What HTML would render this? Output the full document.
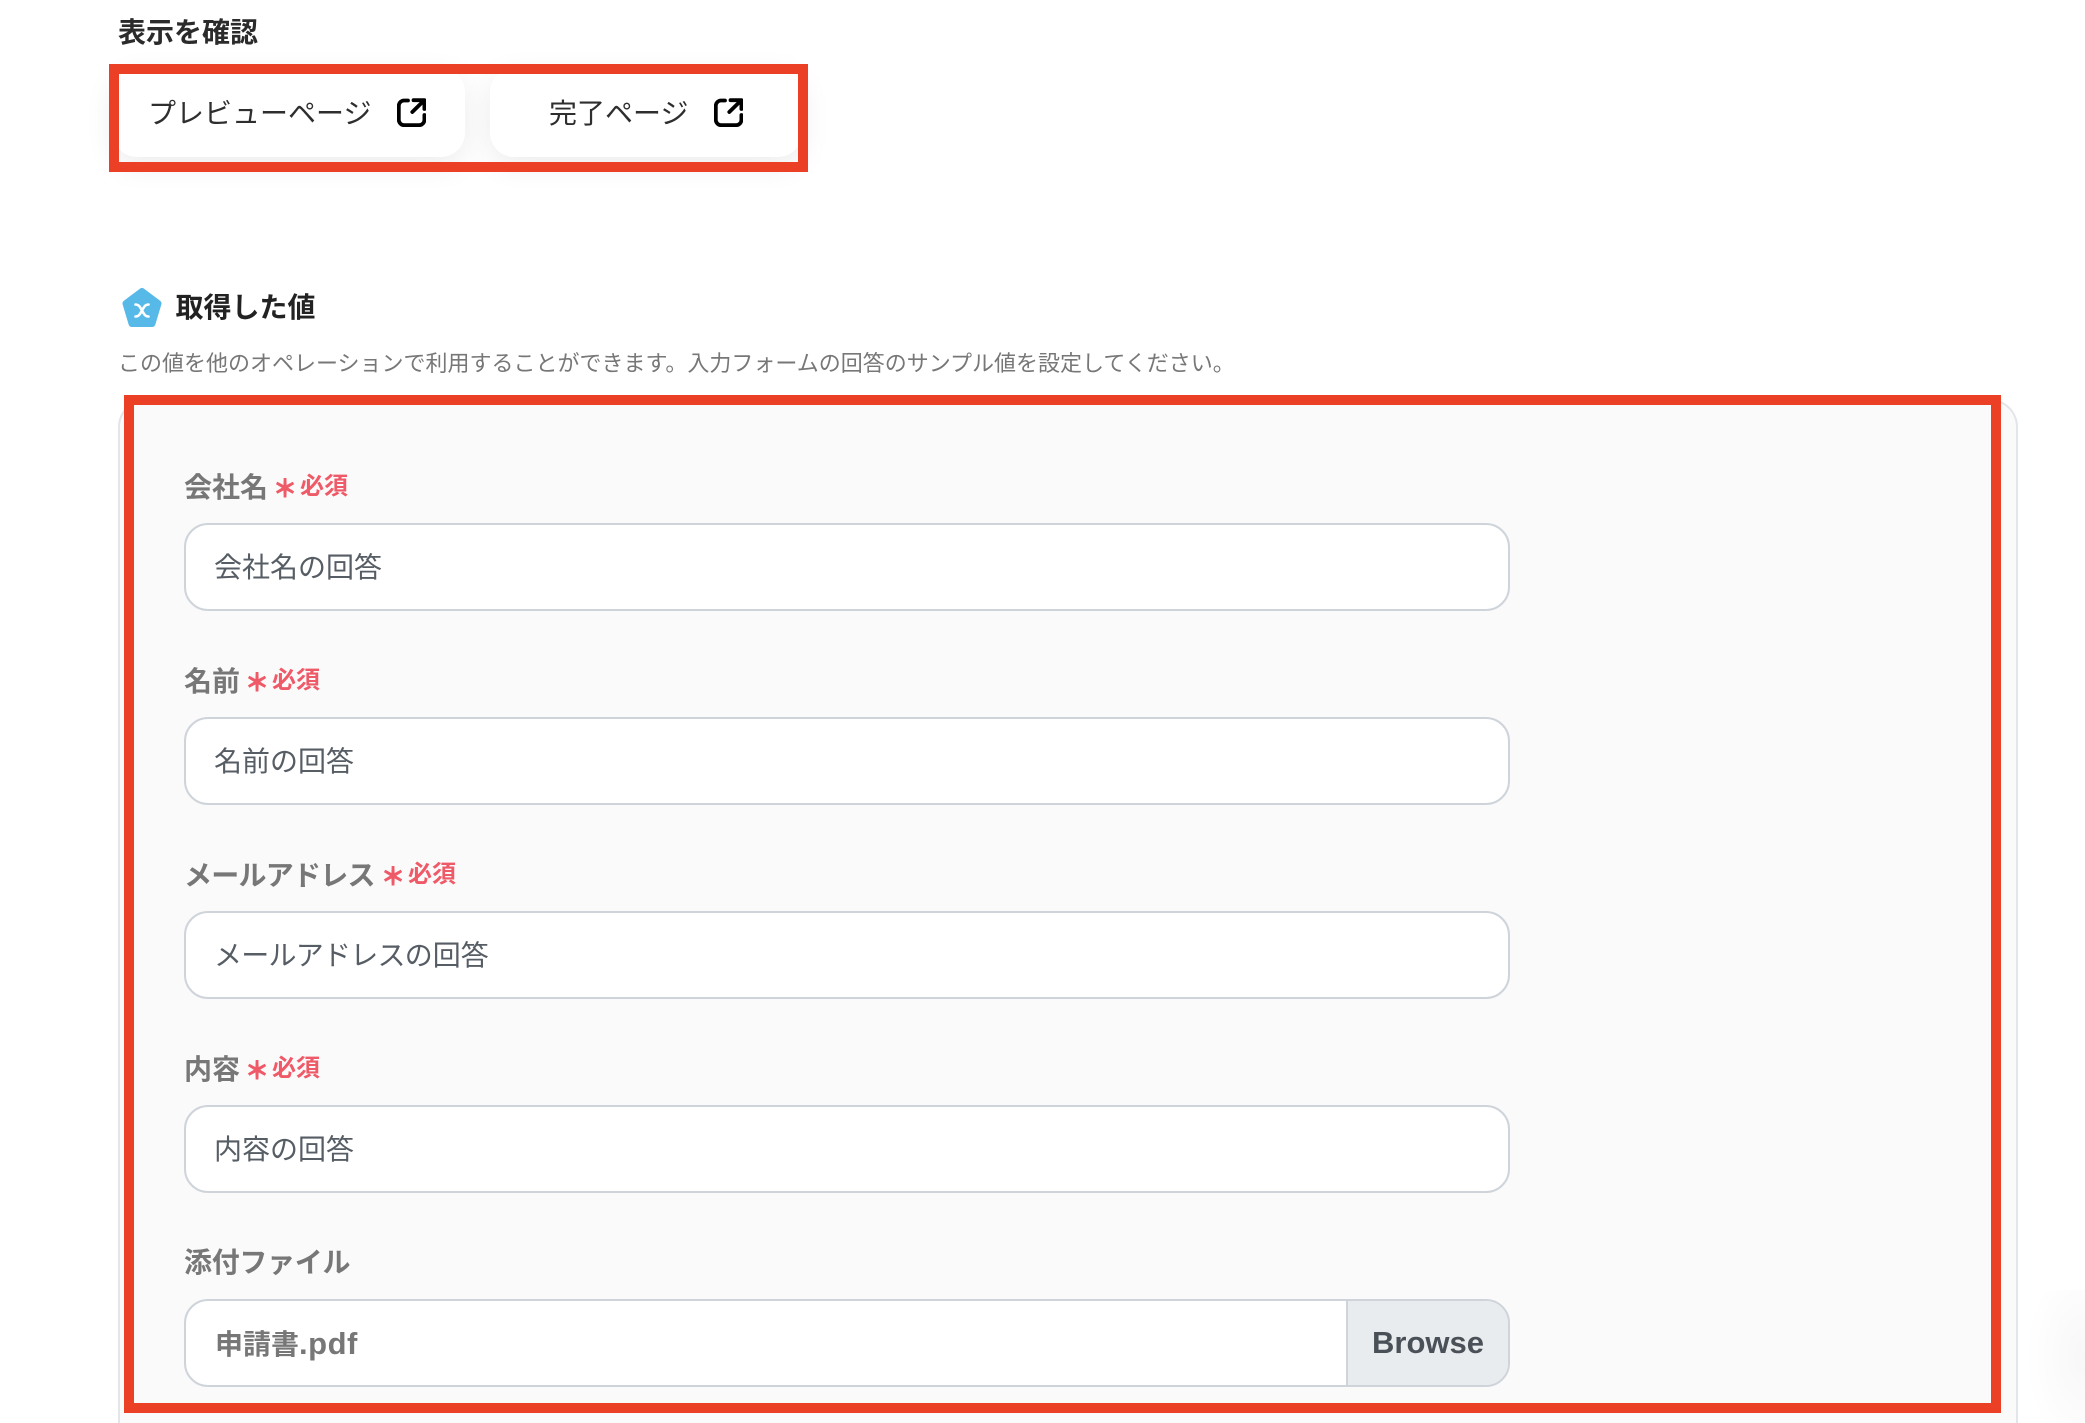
<!DOCTYPE html>
<html lang="ja">
<head>
<meta charset="utf-8">
<title>表示を確認</title>
<style>
html,body{margin:0;padding:0;background:#fff;width:2085px;height:1423px;overflow:hidden}
body{font-family:"Liberation Sans","Noto Sans CJK JP",sans-serif}
#w{position:relative;width:2085px;height:1423px;overflow:hidden}
.t{position:absolute;white-space:nowrap;line-height:40px;height:40px}
.b{font-weight:700}
.btn{position:absolute;top:68px;height:89px;background:#fff;border-radius:24px;box-shadow:0 8px 30px rgba(0,0,0,.08)}
.red{position:absolute;box-sizing:border-box;border:10px solid #eb4025}
.panel{position:absolute;left:118px;top:399px;width:1900px;height:1024px;box-sizing:border-box;background:#fafafa;border:2px solid #e2e5ea;border-bottom:0;border-radius:28px 28px 0 0}
.input{position:absolute;left:184px;width:1326px;height:88px;box-sizing:border-box;background:#fff;border:2px solid #ced4da;border-radius:24px}
.label{color:#777;font-size:28px;font-weight:700;left:184px}
.ast{color:#ef5a68;font-size:24px;font-weight:700;font-family:"Noto Sans CJK JP",sans-serif;-webkit-text-stroke:.9px #ef5a68}
.req{color:#ef5a68;font-size:24px;font-weight:700}
.val{color:#565d64;font-size:28px;left:214px}
.k{letter-spacing:-.75px}
.icon{position:absolute;top:98px;width:29px;height:29px}
</style>
</head>
<body>
<div id="w">
<div style="position:absolute;left:2025px;top:1290px;width:60px;height:133px;background:radial-gradient(ellipse 60px 100px at 100% 50%,rgba(0,0,0,.03),rgba(0,0,0,0));"></div>

<div class="t b" style="left:118px;top:13px;font-size:28px;color:#2b2b2b">表示を確認</div>

<div class="btn" style="left:113px;width:352px"></div>
<div class="btn" style="left:490px;width:312px"></div>
<div class="t" style="left:148px;top:94px;font-size:28px;color:#2e2e2e">プレビューページ</div>
<svg class="icon" style="left:397px" viewBox="0 0 29 29" fill="none" stroke="#000" stroke-width="3.8" stroke-linecap="round" stroke-linejoin="round"><path d="M11 2.500H7A5.300 5.300 0 0 0 1.800 7.800V22A5.300 5.300 0 0 0 7 27.200H22.200A5.300 5.300 0 0 0 27.400 22V17"/><path d="M16.500 2.200H27.400V11"/><path d="M15.300 14L26.500 3"/></svg>
<div class="t" style="left:549px;top:94px;font-size:28px;color:#2e2e2e">完了ページ</div>
<svg class="icon" style="left:714px" viewBox="0 0 29 29" fill="none" stroke="#000" stroke-width="3.8" stroke-linecap="round" stroke-linejoin="round"><path d="M11 2.500H7A5.300 5.300 0 0 0 1.800 7.800V22A5.300 5.300 0 0 0 7 27.200H22.200A5.300 5.300 0 0 0 27.400 22V17"/><path d="M16.500 2.200H27.400V11"/><path d="M15.300 14L26.500 3"/></svg>

<svg style="position:absolute;left:119px;top:286px" width="46" height="44" viewBox="0 0 46 44"><path d="M23 5.500L39 17.500L33 37.500H13L7 17.500Z" fill="#56b9e8" stroke="#56b9e8" stroke-width="7" stroke-linejoin="round"/><path d="M16.500 18.500C20 18.500 21 21 23 24.500C25 28 26 30.500 29.500 30.500M29.500 18.500C26 18.500 25 21 23 24.500C21 28 20 30.500 16.500 30.500" fill="none" stroke="#fff" stroke-width="2.600" stroke-linecap="round"/></svg>
<div class="t b" style="left:175.500px;top:288px;font-size:28px;color:#222">取得した値</div>
<div class="t" style="left:118px;top:344px;font-size:22px;color:#777">この値を他のオペレーションで利用することができます。入力フォームの回答のサンプル値を設定してください。</div>

<div class="panel"></div>

<div class="t label" style="top:468px">会社名</div>
<div class="t ast" style="left:273px;top:467px">＊</div>
<div class="t req" style="left:300px;top:467px">必須</div>
<div class="input" style="top:523px"></div>
<div class="t val" style="top:548px">会社名の回答</div>

<div class="t label" style="top:662px">名前</div>
<div class="t ast" style="left:245px;top:661px">＊</div>
<div class="t req" style="left:272px;top:661px">必須</div>
<div class="input" style="top:717px"></div>
<div class="t val" style="top:742px">名前の回答</div>

<div class="t label" style="top:856px"><span class="k">メールアドレス</span></div>
<div class="t ast" style="left:381px;top:855px">＊</div>
<div class="t req" style="left:408px;top:855px">必須</div>
<div class="input" style="top:911px"></div>
<div class="t val" style="top:936px"><span class="k">メールアドレス</span>の回答</div>

<div class="t label" style="top:1050px">内容</div>
<div class="t ast" style="left:245px;top:1049px">＊</div>
<div class="t req" style="left:272px;top:1049px">必須</div>
<div class="input" style="top:1105px"></div>
<div class="t val" style="top:1130px">内容の回答</div>

<div class="t label" style="top:1243px;letter-spacing:-.3px">添付ファイル</div>
<div class="input" style="top:1299px;overflow:hidden">
  <div style="position:absolute;right:0;top:0;bottom:0;width:162px;box-sizing:border-box;background:#e9ecef;border-left:2px solid #ced4da"></div>
</div>
<div class="t" style="left:215px;top:1324px;font-size:28px;font-weight:700;color:#777">申請書<span style="font-size:31px;letter-spacing:.5px">.pdf</span></div>
<div class="t b" style="left:1372px;top:1323px;font-size:31px;color:#495057">Browse</div>

<div class="red" style="left:109px;top:64px;width:699px;height:108px"></div>
<div class="red" style="left:124px;top:395px;width:1877px;height:1018px"></div>
</div>
</body>
</html>
